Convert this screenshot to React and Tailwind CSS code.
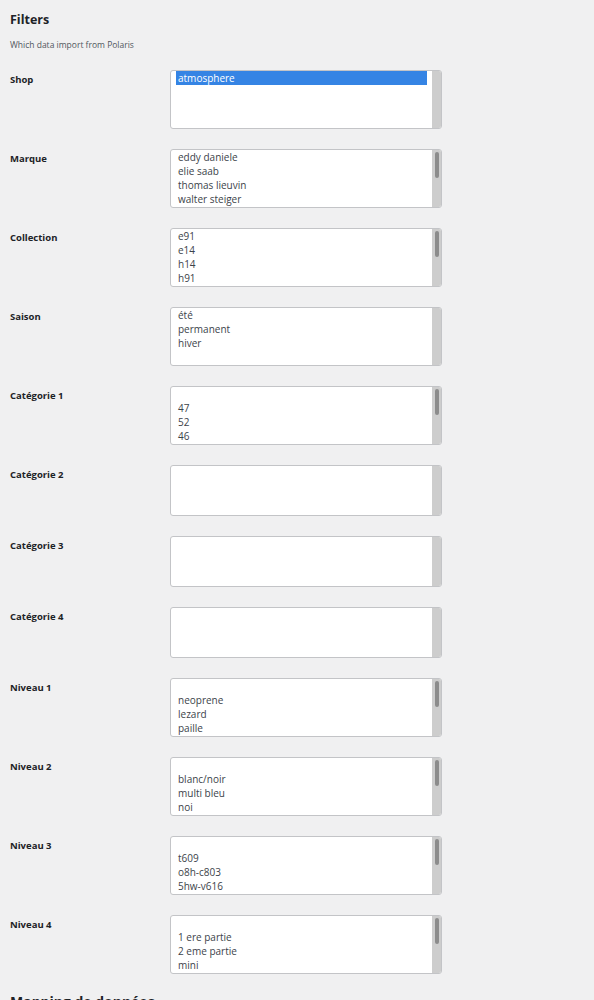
const rows = [
  { label: 'Shop', items: ['atmosphere'], selected: 0, thumb: false },
  { label: 'Marque', items: ['eddy daniele', 'elie saab', 'thomas lieuvin', 'walter steiger'], thumb: true },
  { label: 'Collection', items: ['e91', 'e14', 'h14', 'h91'], thumb: true },
  { label: 'Saison', items: ['été', 'permanent', 'hiver'], thumb: false },
  { label: 'Catégorie 1', items: ['', '47', '52', '46'], thumb: true },
  { label: 'Catégorie 2', items: [], small: true },
  { label: 'Catégorie 3', items: [], small: true },
  { label: 'Catégorie 4', items: [], small: true },
  { label: 'Niveau 1', items: ['', 'neoprene', 'lezard', 'paille'], thumb: true },
  { label: 'Niveau 2', items: ['', 'blanc/noir', 'multi bleu', 'noi'], thumb: true },
  { label: 'Niveau 3', items: ['', 't609', 'o8h-c803', '5hw-v616'], thumb: true },
  { label: 'Niveau 4', items: ['', '1 ere partie', '2 eme partie', 'mini'], thumb: true },
];

const ListBox = ({ items, selected, thumb, small }) => (
  <div
    className={`relative w-[272px] ${small ? 'h-[51px]' : 'h-[59px]'} bg-white border border-[#c3c4c7] rounded-[3px] overflow-hidden flex`}
  >
    <div className="flex-1 pl-[5px] pr-[5px]">
      {items.map((it, i) => (
        <div
          key={i}
          className={`h-[14px] leading-[14px] text-[10px] pl-[2px] ${
            selected === i ? 'bg-[#3584e4] text-white' : 'text-[#3c434a]'
          }`}
        >
          {it}
        </div>
      ))}
    </div>
    <div className="w-[9px] bg-[#cdcdcd] flex justify-center pt-[2px]">
      {thumb && <div className="w-[4px] h-[26px] bg-[#8c8c8c] rounded-[2px]" />}
    </div>
  </div>
);

export default function App() {
  return (
    <div className="min-h-[1000px] bg-[#f0f0f1] px-[10px] pt-[12px] text-[#1d2327] font-['Open_Sans','Noto_Sans',sans-serif]">
      <h2 className="text-[12.5px] font-bold leading-[16px]">Filters</h2>
      <p className="text-[8.5px] text-[#50575e] mt-[11px] leading-[12px]">Which data import from Polaris</p>
      <div className="mt-[19px] flex flex-col gap-[20px]">
        {rows.map((r) => (
          <div key={r.label} className="flex">
            <div className="w-[160px] pt-[3px] text-[9.5px] font-bold leading-[14px]">{r.label}</div>
            <ListBox {...r} />
          </div>
        ))}
      </div>
      <h2 className="mt-[19px] text-[14px] font-bold leading-[18px]">Mapping de données</h2>
    </div>
  );
}
